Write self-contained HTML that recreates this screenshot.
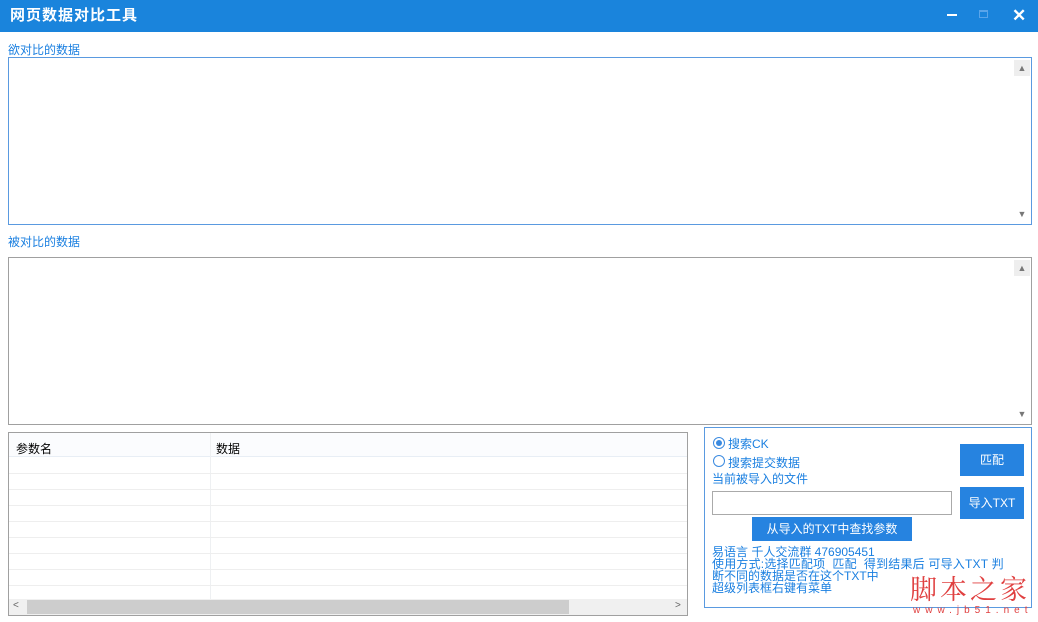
<!DOCTYPE html>
<html><head><meta charset="utf-8"><style>
*{margin:0;padding:0;box-sizing:border-box}
body{width:1038px;height:622px;background:#fff;position:relative;overflow:hidden;font-family:"Liberation Sans","Noto Sans CJK SC",sans-serif;font-size:12px}
.a{position:absolute}
.title{left:0;top:0;width:1038px;height:32px;background:#1a84dc;color:#fff;font-weight:bold;font-size:15px;line-height:32px;padding-left:10px;letter-spacing:1px}
.lbl{color:#1a7fe0;font-size:12px}
.ta{border:1px solid #5a9ae0;background:#fff}
.ta2{border:1px solid #a0a0a0;background:#fff}
.sb{position:absolute;right:1px;width:16px;height:16px;background:#eee;color:#777;font-size:9px;text-align:center;line-height:16px}
.btn{background:#2683e0;color:#fff;text-align:center;font-size:12px}
.bt{color:#1a7fe0;font-size:12px;line-height:12px;white-space:nowrap}
</style></head><body>
<div class="a title">网页数据对比工具</div>
<div class="a" style="left:947px;top:14px;width:10px;height:2px;background:#fff"></div>
<div class="a" style="left:979px;top:10px;width:9px;height:8px;border:1px solid #5aa5ea;border-top-width:2px"></div>
<div class="a" style="left:1012px;top:6px;color:#fff;font-size:17px;font-weight:bold">✕</div>
<div class="a lbl" style="left:8px;top:41px">欲对比的数据</div>
<div class="a ta" style="left:8px;top:57px;width:1024px;height:168px"><div class="sb" style="top:2px">▲</div><div class="sb" style="bottom:2px;background:#fff">▼</div></div>
<div class="a lbl" style="left:8px;top:233px">被对比的数据</div>
<div class="a ta2" style="left:8px;top:257px;width:1024px;height:168px"><div class="sb" style="top:2px">▲</div><div class="sb" style="bottom:2px;background:#fff">▼</div></div>
<div class="a ta2" style="left:8px;top:432px;width:680px;height:184px;overflow:hidden">
<div class="a" style="left:0;top:0;width:678px;height:24px;background:#fbfcfe;border-bottom:1px solid #e8eef5"></div>
<div class="a" style="left:7px;top:7px;color:#000">参数名</div>
<div class="a" style="left:207px;top:7px;color:#000">数据</div>
<div class="a" style="left:201px;top:0;width:1px;height:166px;background:#eef0f2"></div>
<div class="a" style="left:0;top:40px;width:678px;height:1px;background:#eee"></div>
<div class="a" style="left:0;top:56px;width:678px;height:1px;background:#eee"></div>
<div class="a" style="left:0;top:72px;width:678px;height:1px;background:#eee"></div>
<div class="a" style="left:0;top:88px;width:678px;height:1px;background:#eee"></div>
<div class="a" style="left:0;top:104px;width:678px;height:1px;background:#eee"></div>
<div class="a" style="left:0;top:120px;width:678px;height:1px;background:#eee"></div>
<div class="a" style="left:0;top:136px;width:678px;height:1px;background:#eee"></div>
<div class="a" style="left:0;top:152px;width:678px;height:1px;background:#eee"></div>
<div class="a" style="left:0;top:166px;width:678px;height:16px;background:#f0f0f0"></div>
<div class="a" style="left:18px;top:167px;width:542px;height:14px;background:#cdcdcd"></div>
<div class="a" style="left:4px;top:167px;color:#666;font-size:10px">&lt;</div>
<div class="a" style="left:666px;top:167px;color:#666;font-size:10px">&gt;</div>
</div>
<div class="a" style="left:704px;top:427px;width:328px;height:181px;border:1px solid #5a9ae0"></div>
<div class="a" style="left:713px;top:437px;width:12px;height:12px;border-radius:50%;border:1px solid #3a8ae0;background:#fff"><div style="margin:2px;width:6px;height:6px;border-radius:50%;background:#3a8ae0"></div></div>
<div class="a bt" style="left:728px;top:438px">搜索CK</div>
<div class="a" style="left:713px;top:455px;width:12px;height:12px;border-radius:50%;border:1px solid #3a8ae0"></div>
<div class="a bt" style="left:728px;top:457px">搜索提交数据</div>
<div class="a bt" style="left:712px;top:473px">当前被导入的文件</div>
<div class="a btn" style="left:960px;top:444px;width:64px;height:32px;line-height:32px">匹配</div>
<div class="a btn" style="left:960px;top:487px;width:64px;height:32px;line-height:32px">导入TXT</div>
<div class="a" style="left:712px;top:491px;width:240px;height:24px;border:1px solid #aaa"></div>
<div class="a btn" style="left:752px;top:517px;width:160px;height:24px;line-height:24px">从导入的TXT中查找参数</div>
<div class="a bt" style="left:712px;top:546px">易语言 千人交流群 476905451</div>
<div class="a bt" style="left:712px;top:558px;letter-spacing:0.2px">使用方式:选择匹配项&nbsp;&nbsp;匹配&nbsp;&nbsp;得到结果后 可导入TXT 判</div>
<div class="a bt" style="left:712px;top:570px">断不同的数据是否在这个TXT中</div>
<div class="a bt" style="left:712px;top:582px">超级列表框右键有菜单</div>
<div class="a" style="left:910px;top:568px;color:#e04040;font-size:27px;font-family:'Noto Serif CJK SC',serif;letter-spacing:3px">脚本之家</div>
<div class="a" style="left:913px;top:605px;color:#e04040;font-size:10px;letter-spacing:5px">www.jb51.net</div>
</body></html>
